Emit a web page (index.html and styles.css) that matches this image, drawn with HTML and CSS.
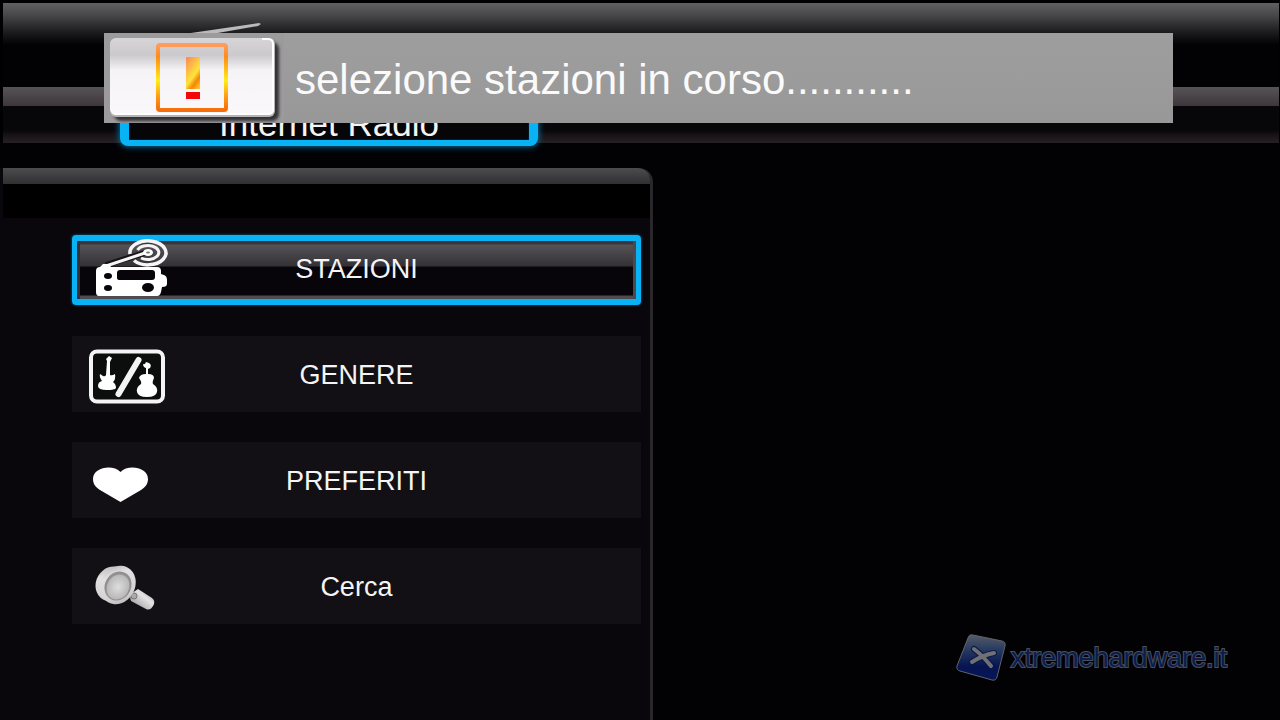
FILE: index.html
```html
<!DOCTYPE html>
<html lang="it">
<head>
<meta charset="utf-8">
<title>Internet Radio</title>
<link rel="stylesheet" href="styles.css">
</head>
<body>
<header class="top">
  <div class="band band-top"></div>
  <div class="band band-mid"></div>
  <div class="band band-low"></div>
  <h1 class="tab">Internet Radio</h1>
</header>

<main class="panel">
  <div class="panel-cap"></div>
  <nav class="menu" aria-label="Internet Radio">
    <button class="item selected" type="button">
      <svg class="icon" viewBox="0 0 90 76" aria-hidden="true">
        <g fill="none" stroke="#f6f4f6">
          <path d="M58 24A18 12 0 1 1 62 30.500" stroke-width="3.500"/>
          <path d="M65.500 20A11 7 0 1 1 69 28" stroke-width="3"/>
          <path d="M34 35L76 22" stroke="#141215" stroke-width="6"/>
          <path d="M31 37L76 22" stroke-width="3"/>
        </g>
        <ellipse cx="76" cy="22.500" rx="5" ry="3.500" fill="#fff"/>
        <ellipse cx="76" cy="22.500" rx="2" ry="1" fill="#777"/>
        <path fill="#fff" fill-rule="evenodd" d="M28 37L31 34H37L39 37H85Q89 37 89 41V44L92 45Q95 46 95 50V54Q95 57 90 57L89 62Q88 66 85 66H27Q24 66 24 62V41Q24 37 28 37ZM48 40Q45 40 45 43V48Q45 50 48 50H80Q83 50 83 47V43Q83 40 80 40ZM32 46A4 3 0 1 0 40 46A4 3 0 1 0 32 46ZM32 58A4 3 0 1 0 40 58A4 3 0 1 0 32 58ZM70 57.500A6 4.500 0 1 0 82 57.500A6 4.500 0 1 0 70 57.500Z"/>
      </svg>
      <span class="label">STAZIONI</span>
    </button>
    <button class="item" type="button">
      <svg class="icon" viewBox="0 0 90 76" aria-hidden="true">
        <rect x="19" y="15.500" width="72" height="50" rx="6" fill="#0b0e0c" stroke="#f4f4f4" stroke-width="4"/>
        <path d="M46.500 58L66.500 24" stroke="#f4f4f4" stroke-width="6" stroke-linecap="round"/>
        <g fill="#fff">
          <path d="M34 39L35 25L34 23L37 20L40 22L38 26V39Q40 40 43 38Q44 43 41 46Q44 48 44 52Q43 54 35 54Q26 54 26 50Q26 46 30 45Q27 41 28 38L31 40Q33 41 34 39Z"/>
          <path d="M74 38L74 32Q71 31 71 28Q73 29 74 26L77 27Q80 29 78 32L76 33L76 38Q82 38 82 42Q80 46 81 48Q86 51 85 56Q84 61 75 61Q66 61 65 56Q64 51 69 48Q70 46 67 42Q68 38 74 38Z"/>
        </g>
      </svg>
      <span class="label">GENERE</span>
    </button>
    <button class="item" type="button">
      <svg class="icon" viewBox="0 0 90 76" aria-hidden="true">
        <path fill="#fff" d="M48.500 60L28 48C23 45 21 41 21 37C21 25 41 22 48.500 30C56 22 76 25 76 37C76 41 74 45 69 48Z"/>
      </svg>
      <span class="label">PREFERITI</span>
    </button>
    <button class="item" type="button">
      <svg class="icon" viewBox="0 0 90 76" aria-hidden="true">
        <defs>
          <linearGradient id="rim" x1="0" y1="0" x2="1" y2="1"><stop offset="0" stop-color="#a8a6a8"/><stop offset=".3" stop-color="#e2e0e1"/><stop offset=".7" stop-color="#d5d2d3"/><stop offset="1" stop-color="#aaa"/></linearGradient>
          <radialGradient id="lens"><stop offset="0" stop-color="#dedede"/><stop offset="1" stop-color="#b8b7b8"/></radialGradient>
          <linearGradient id="grip" x1="1" y1="0" x2="0" y2="1"><stop offset="0" stop-color="#999"/><stop offset=".4" stop-color="#e4e4e4"/><stop offset="1" stop-color="#888"/></linearGradient>
        </defs>
        <path d="M66 41L80 50Q84 53 81 58Q78 63 74 61L59 53Q57 49 60 45Z" fill="url(#grip)"/>
        <circle cx="62" cy="48" r="3" fill="#aaa" stroke="#777"/>
        <ellipse cx="40" cy="36" rx="16" ry="18" transform="rotate(30 40 36)" fill="url(#rim)"/>
        <ellipse cx="46" cy="37" rx="17" ry="20" transform="rotate(30 46 37)" fill="url(#rim)"/>
        <ellipse cx="46" cy="38" rx="13" ry="15" transform="rotate(30 46 38)" fill="#918f90"/>
        <ellipse cx="46" cy="39" rx="11" ry="13" transform="rotate(30 46 39)" fill="url(#lens)"/>
      </svg>
      <span class="label">Cerca</span>
    </button>
  </nav>
</main>

<div class="toast" role="status">
  <svg class="radio" viewBox="0 0 180 104" aria-hidden="true">
    <defs>
      <linearGradient id="case" x1="0" y1="0" x2="0" y2="1"><stop offset="0" stop-color="#d7d5d8"/><stop offset=".22" stop-color="#cbc9cc"/><stop offset=".42" stop-color="#f5f3f6"/><stop offset="1" stop-color="#faf8fb"/></linearGradient>
      <linearGradient id="frame" x1="0" y1="0" x2="0" y2="1"><stop offset="0" stop-color="#ff9c60"/><stop offset=".18" stop-color="#ff8a16"/><stop offset=".55" stop-color="#ffee18"/><stop offset=".8" stop-color="#ff9814"/><stop offset="1" stop-color="#f66d0c"/></linearGradient>
      <linearGradient id="mark" x1=".2" y1="0" x2=".8" y2="1"><stop offset="0" stop-color="#fa9355"/><stop offset=".58" stop-color="#ffe43a"/><stop offset=".8" stop-color="#f58508"/><stop offset="1" stop-color="#ffc020"/></linearGradient>
      <filter id="soft"><feGaussianBlur stdDeviation="1.500"/></filter>
    </defs>
    <path d="M80 15L155 4L157 5L154 7L108 15Z" fill="#bbb9bb"/>
    <rect y="14" width="180" height="90" fill="#9b9b9b"/>
    <rect x="10" y="23" width="165" height="79" rx="7" fill="#353337" filter="url(#soft)"/>
    <rect x="6" y="19" width="165" height="79" rx="6" fill="#b5b3b6"/>
    <rect x="6" y="19" width="164" height="77" rx="6" fill="url(#case)"/>
    <path d="M158 20H164Q169 20 169 25V91Q169 95 164 95H10" fill="none" stroke="#fff" stroke-width="2"/>
    <rect x="54" y="26" width="68" height="65" rx="2" fill="none" stroke="url(#frame)" stroke-width="4"/>
    <rect x="82" y="38" width="14" height="32" fill="url(#mark)"/>
    <rect x="82" y="73" width="14" height="7" fill="#f20808"/>
  </svg>
  <p class="message">selezione stazioni in corso...........</p>
</div>

<div class="brand">
  <svg class="brand-mark" viewBox="0 0 54 50" aria-hidden="true">
    <defs><linearGradient id="blue" x1="0" y1="0" x2="0" y2="1"><stop offset="0" stop-color="#565c68"/><stop offset=".35" stop-color="#24385f"/><stop offset=".7" stop-color="#061452"/><stop offset="1" stop-color="#07165a"/></linearGradient></defs>
    <path d="M18 2L47 8Q51 9 50 13L42 44Q41 48 37 47L5 38Q1 37 2 33L13 5Q14 1 18 2Z" fill="url(#blue)" stroke="#626269"/>
    <path d="M19 16Q27 22 36 33M39 20Q28 22 17 29" fill="none" stroke="#0a1845" stroke-width="6" stroke-linecap="round"/>
    <path d="M19 16Q27 22 36 33M39 20Q28 22 17 29" fill="none" stroke="#707077" stroke-width="4" stroke-linecap="round"/>
  </svg>
  <span class="brand-name">xtremehardware.it</span>
</div>
</body>
</html>
```
FILE: styles.css
```css
* { box-sizing: border-box; }

body {
  margin: 0;
  min-height: 100vh;
  display: flex;
  flex-direction: column;
  position: relative;
  overflow: hidden;
  background: #020104;
  color: #f4f4f4;
  font-family: "Liberation Sans", Arial, sans-serif;
}

.top {
  position: relative;
  padding: 3px 1px 0 3px;
  background: #000;
}

.band-top {
  height: 84px;
  background: linear-gradient(#606062 0, #48484a 12px, #29282b 24px, #111013 34px, #020104 42px);
}

.band-mid {
  height: 19px;
  background: linear-gradient(#565456, #3e363a);
}

.band-low {
  height: 37px;
  background: linear-gradient(#070609 0, #070609 24px, #1a1417 30px, #252124 100%);
}

.tab {
  position: absolute;
  left: 120px;
  bottom: -3px;
  width: 418px;
  height: 80px;
  margin: 0;
  padding: 38px 0 0;
  border: solid #09b2f4;
  border-width: 0 9px 6px;
  border-radius: 8px;
  background: #060508;
  box-shadow: inset 0 0 2px #0a4a65, 0 0 7px #088cc2;
  font-size: 35px;
  font-weight: 400;
  line-height: 40px;
  text-align: center;
}

.panel {
  flex: 1;
  width: 51%;
  margin-top: 25px;
  border: solid #29272a;
  border-width: 0 3px 0 0;
  border-top-right-radius: 14px;
  background: #09070b;
}

.panel-cap {
  height: 50px;
  margin-left: 3px;
  border-top-right-radius: 12px;
  background: linear-gradient(#4c4b4d 0, #302f31 16px, #000 16px);
}

.menu {
  display: flex;
  flex-direction: column;
  gap: 30px;
  padding: 12px 9px 96px 72px;
}

.item {
  display: grid;
  grid-template-columns: 1fr;
  align-items: center;
  height: 76px;
  padding: 0;
  border: 0;
  background: #121014;
  color: #f4f4f4;
  font: 27px/32px "Liberation Sans", Arial, sans-serif;
}

.icon,
.label {
  grid-area: 1 / 1;
}

.icon {
  width: 90px;
  height: 76px;
  overflow: visible;
}

.label {
  padding-top: 2px;
  text-align: center;
}

.selected {
  height: 70px;
  margin: 5px 0 1px;
  border: 6px solid #08b2f4;
  border-left-width: 5px;
  border-right-width: 5px;
  border-radius: 4px;
  background: linear-gradient(#38363a 0, #38363a 3px, #555356 4px, #333135 25px, #070509 26px, #070509 54px, #4d4b4e 55px, #4d4b4e 100%);
  background-origin: padding-box;
  box-shadow: inset 3px 0 #343136, inset -3px 0 #4c494d, 0 0 3px #08628a;
}

.selected .icon {
  margin: -11px 0 -7px -5px;
}

.selected .label {
  padding: 0 0 2px;
}

.toast {
  position: absolute;
  top: 33px;
  left: 104px;
  right: 107px;
  display: flex;
  align-items: center;
  gap: 11px;
  height: 90px;
  background: linear-gradient(#9e9e9e, #989898);
}

.radio {
  flex: none;
  width: 180px;
  height: 104px;
  margin-top: -14px;
}

.message {
  margin: 0;
  padding-top: 4px;
  color: #fafafa;
  font-size: 42px;
  line-height: 48px;
  white-space: nowrap;
}

.brand {
  position: absolute;
  right: 53px;
  bottom: 37px;
  display: flex;
  align-items: center;
  gap: 2px;
}

.brand-mark {
  width: 54px;
  height: 50px;
}

.brand-name {
  color: #0b1d4b;
  font-size: 27px;
  line-height: 32px;
  -webkit-text-stroke: 2px #4a4e5b;
  paint-order: stroke fill;
}
```
